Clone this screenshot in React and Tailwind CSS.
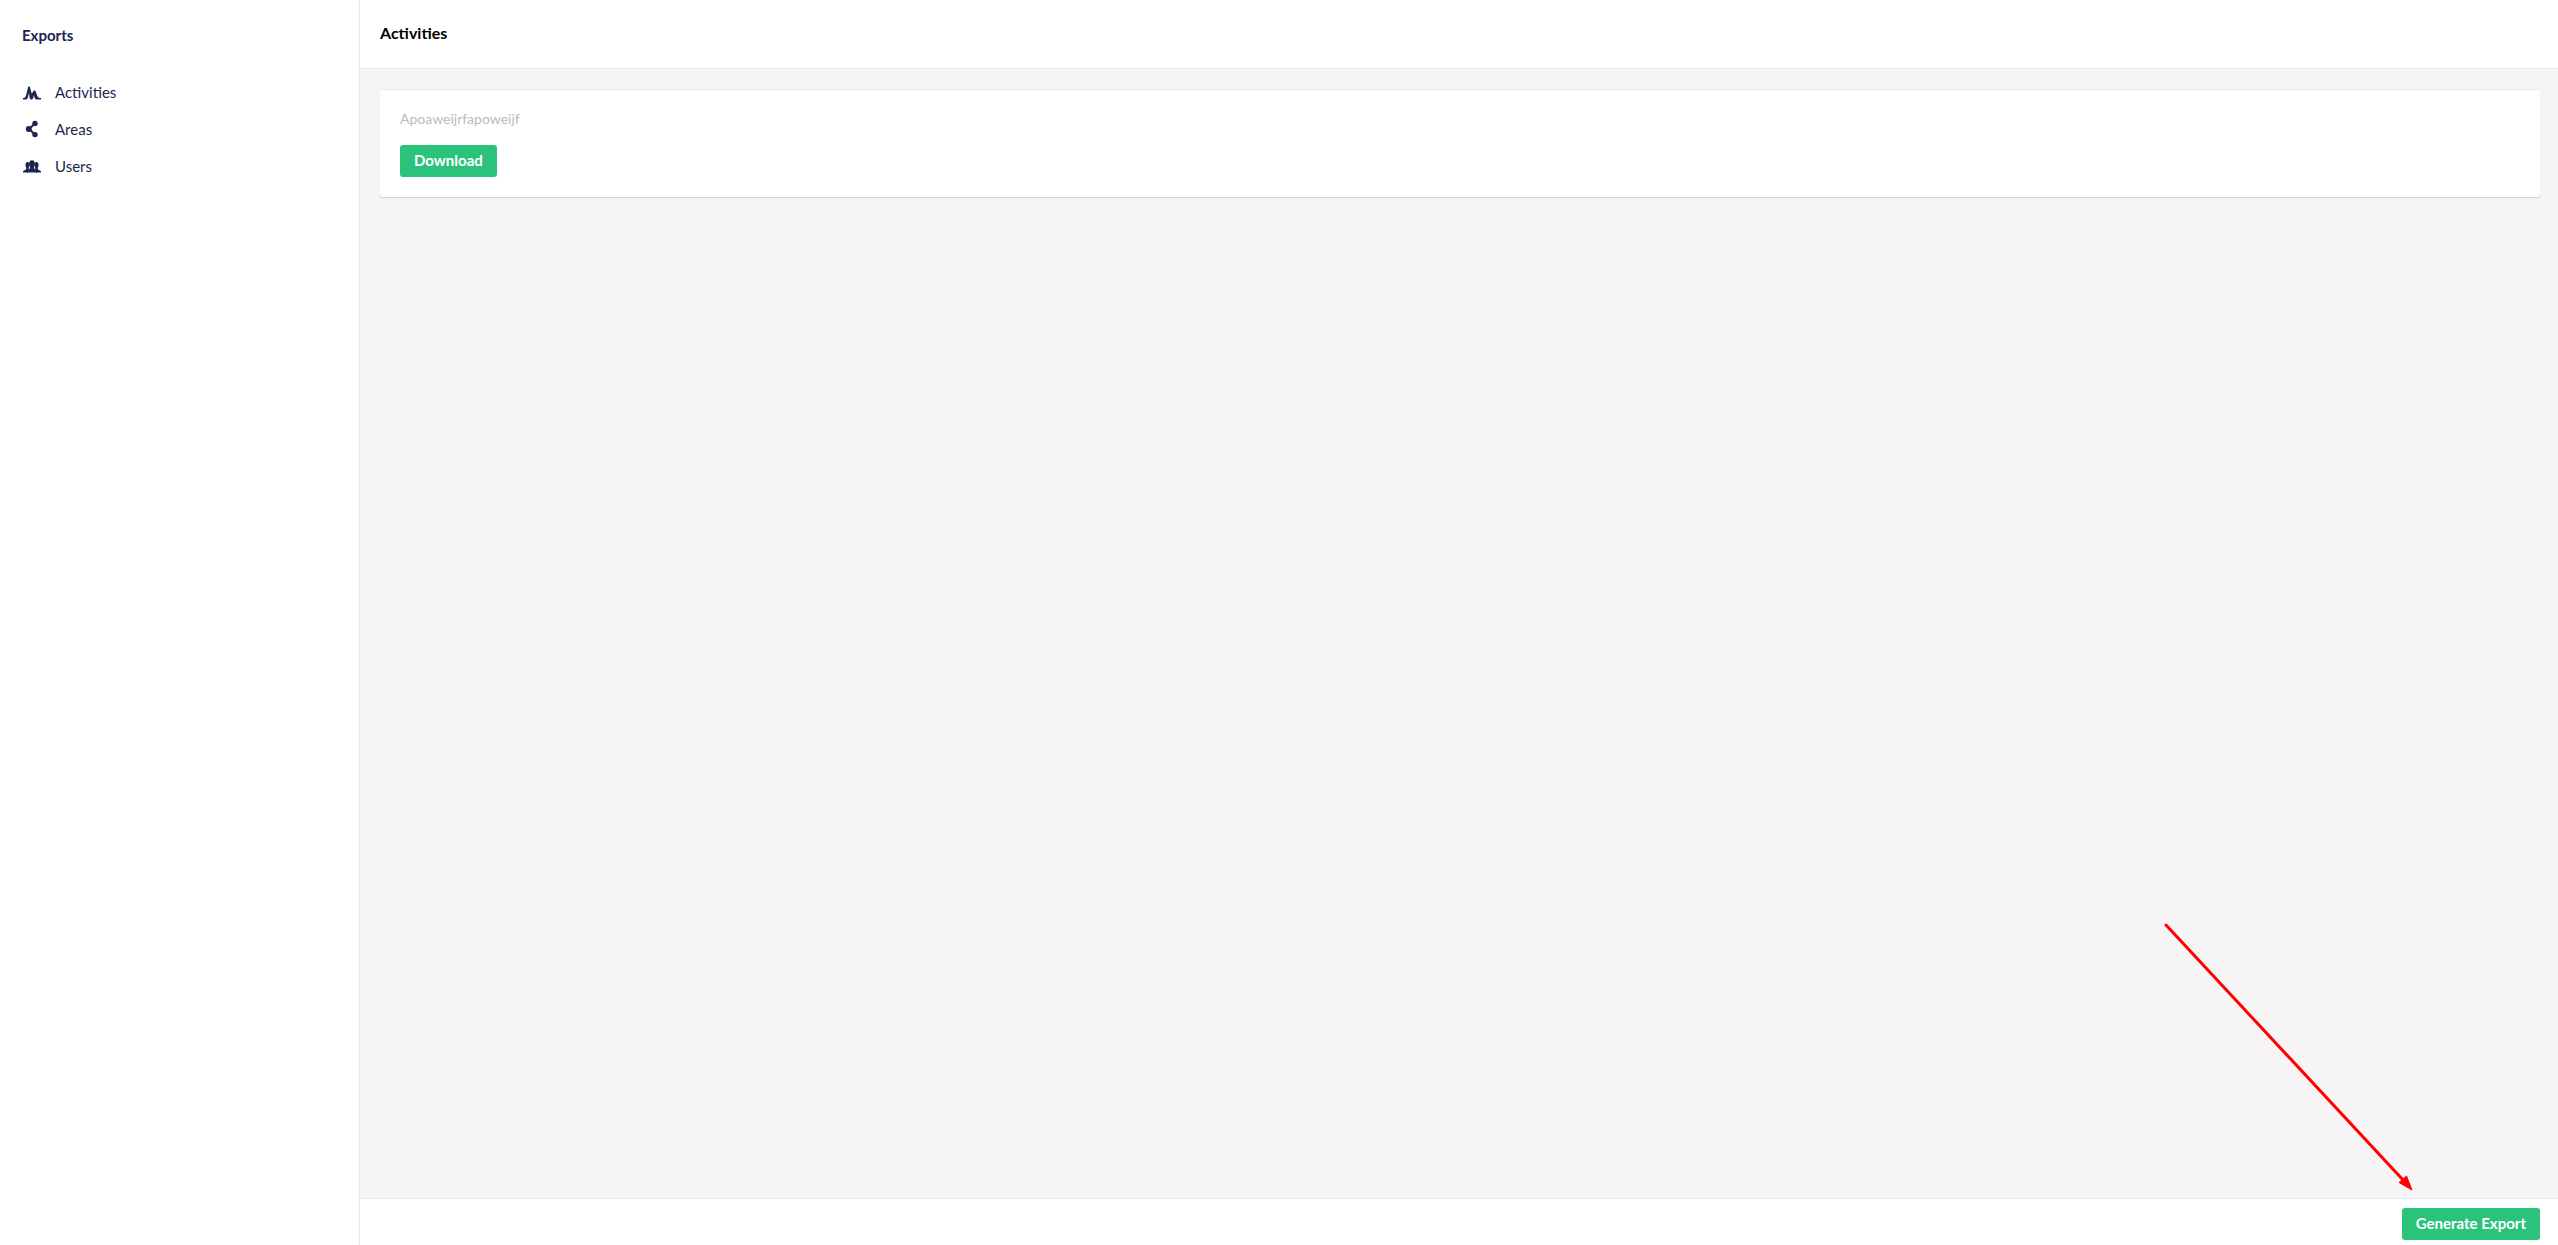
const ICONS = {
  activity: (
    <path d="M0 16.500v-1.500c1.700 0 2.500-.6 3-2.500L5.300 3.500h1.400l2.100 7.200L10.700 7.500h1.500l2.200 5.500c.6 1.500 1.500 2 3.600 2v1.500h-4.200c-1.300 0-1.900-.8-2.300-2l-.5-2.200-.9 2.700c-.4 1.100-.9 1.500-1.700 1.500-1 0-1.500-.6-1.800-1.800L6 10l-1 4c-.5 1.900-1.200 2.500-2.700 2.500z" />
  ),
  share: (
    <>
      <path d="M12 3.500 6 9l6 5.500" fill="none" stroke="currentColor" strokeWidth="2" />
      <circle cx="5.800" cy="9" r="3" />
      <circle cx="12" cy="3.400" r="2.700" />
      <circle cx="12" cy="14.600" r="2.700" />
    </>
  ),
  users: (
    <>
      <ellipse cx="9" cy="6.700" rx="2.900" ry="3.500" />
      <ellipse cx="4.500" cy="8" rx="2" ry="3" />
      <ellipse cx="13.500" cy="8" rx="2" ry="3" />
      <path d="M7 9h4v2.500l3.500 1.500v2.500h-11V13L7 11.500z" />
      <path d="M3.200 9.500h2.600v2.500l-1 3.500H0v-1.300l3.200-1.900zM14.800 9.500h-2.600v2.500l1 3.500H18v-1.300l-3.200-1.900z" />
    </>
  ),
};

const NAV_ITEMS = [
  { label: 'Activities', icon: 'activity' },
  { label: 'Areas', icon: 'share' },
  { label: 'Users', icon: 'users' },
];

function GreenButton({ children }) {
  return (
    <button type="button" className="h-8 px-[14px] pb-[2px] rounded-[3px] bg-[#2bc37c] hover:bg-[#25a76a] text-white text-[15px] leading-5 font-bold">
      {children}
    </button>
  );
}

function Sidebar() {
  return (
    <aside className="w-[360px] shrink-0 bg-white border-r border-[#e9e9eb] text-[#1b264f] text-[15px] leading-5">
      <h5 className="px-[22px] pt-[25px] pb-7 font-bold">Exports</h5>
      <nav>
        <ul>
          {NAV_ITEMS.map(item => (
            <li key={item.label}>
              <a href="#" className="flex items-center gap-[14px] h-[37px] px-[23px] hover:bg-[#f6f4f4]">
                <svg viewBox="0 0 18 18" fill="currentColor" className="w-[18px] h-[18px]" aria-hidden="true">
                  {ICONS[item.icon]}
                </svg>
                {item.label}
              </a>
            </li>
          ))}
        </ul>
      </nav>
    </aside>
  );
}

export default function App() {
  return (
    <div className="relative flex min-h-screen overflow-hidden bg-white font-['Lato',sans-serif]">
      <Sidebar />
      <div className="flex-1 flex flex-col min-w-0">
        <header className="flex items-center h-[69px] pl-5 pb-[2px] bg-white border-b border-[#e9e9eb]">
          <h1 className="text-[16px] leading-5 font-bold text-black">Activities</h1>
        </header>

        <main className="flex-1 bg-[#f6f4f5] pt-5 pl-5 pr-[18px]">
          <section className="bg-white rounded-[3px] border-t border-[#e9e9eb] px-5 pt-[19px] pb-5 shadow-[0_1px_1px_0_rgba(0,0,0,0.16)]">
            <p className="text-[14px] leading-5 text-[#bbbabf] mb-4">Apoaweijrfapoweijf</p>
            <GreenButton>Download</GreenButton>
          </section>
        </main>

        <footer className="flex justify-end pt-[9px] pb-[5px] pr-[18px] bg-white border-t border-[#e9e9eb]">
          <GreenButton>Generate Export</GreenButton>
        </footer>
      </div>

      {/* callout arrow pointing at the export button */}
      <svg viewBox="0 0 250 270" className="absolute right-[144px] bottom-[53px] w-[250px] h-[270px] pointer-events-none" aria-hidden="true">
        <path d="M2 3 240 259" fill="none" stroke="#ff0000" strokeWidth="3" strokeLinecap="round" />
        <path d="M248 268 235 260.500 242.500 254z" fill="#ff0000" stroke="#ff0000" />
      </svg>
    </div>
  );
}
